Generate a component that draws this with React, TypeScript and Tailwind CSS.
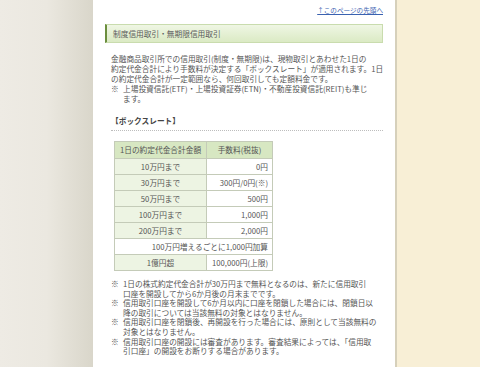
import React from "react";

const font = { fontFamily: '"Noto Sans CJK JP", "Noto Sans", sans-serif' };

function Line({ children, indent = false }: { children: React.ReactNode; indent?: boolean }) {
  return <div className={`whitespace-nowrap ${indent ? "pl-[12px]" : ""}`}>{children}</div>;
}

function Note({ lines }: { lines: string[] }) {
  return (
    <div>
      <div className="flex whitespace-nowrap">
        <span className="w-[12px] shrink-0">※</span>
        <span>{lines[0]}</span>
      </div>
      {lines.slice(1).map((l, i) => (
        <div key={i} className="pl-[12px] whitespace-nowrap">{l}</div>
      ))}
    </div>
  );
}

const rows: [string, string][] = [
  ["10万円まで", "0円"],
  ["30万円まで", "300円/0円(※)"],
  ["50万円まで", "500円"],
  ["100万円まで", "1,000円"],
  ["200万円まで", "2,000円"],
];

export default function App() {
  return (
    <div className="flex h-[367px] w-[480px] overflow-hidden text-[#555]" style={font}>
      <div className="w-[93px] shrink-0 bg-gradient-to-r from-[#eeebe4] via-[#ebe8e0] to-[#d9d6ca]" />
      <div className="w-[302px] shrink-0 bg-white px-[12px] text-[7.7px]">
        <div className="mt-[5px] flex h-[10px] items-center justify-end leading-[10px]">
          <span className="text-[6.6px] text-[#3a62b0] underline">↑このページの先頭へ</span>
        </div>
        <div className="mt-[9px] flex h-[19px] items-center border border-l-2 border-[#c9dcae] border-l-[#6b8e3e] bg-gradient-to-b from-[#eff6e4] to-[#dbeac4] pl-[6px] text-[#5a5a5a]">
          制度信用取引・無期限信用取引
        </div>
        <div className="mt-[11px] px-[6px] leading-[10px]">
          <Line>金融商品取引所での信用取引(制度・無期限)は、現物取引とあわせた1日の</Line>
          <Line>約定代金合計により手数料が決定する「ボックスレート」が適用されます。1日</Line>
          <Line>の約定代金合計が一定範囲なら、何回取引しても定額料金です。</Line>
          <div className="flex whitespace-nowrap">
            <span className="w-[12px] shrink-0">※</span>
            <span>上場投資信託(ETF)・上場投資証券(ETN)・不動産投資信託(REIT)も準じ</span>
          </div>
          <Line indent>ます。</Line>
          <div className="mt-[12px] font-bold leading-[10px] text-[#444]">【ボックスレート】</div>
          <div className="mt-[4px] mr-[-6px] border-b border-dotted border-[#bdbdbd]" />
          <table className="ml-[3px] mt-[10px] w-[158px] table-fixed border-collapse text-[#555]">
            <colgroup>
              <col className="w-[92px]" />
              <col className="w-[66px]" />
            </colgroup>
            <tbody>
              <tr className="h-[17px] bg-[#d7e7c2]">
                <td className="border border-[#c4cbb8] text-center">1日の約定代金合計金額</td>
                <td className="border border-[#c4cbb8] text-center">手数料(税抜)</td>
              </tr>
              {rows.map(([a, b]) => (
                <tr key={a} className="h-[16px]">
                  <td className="border border-[#c4cbb8] bg-[#edf4e3] text-center">{a}</td>
                  <td className="border border-[#c4cbb8] bg-white pr-[4px] text-right">{b}</td>
                </tr>
              ))}
              <tr className="h-[16px]">
                <td colSpan={2} className="border border-[#c4cbb8] bg-white pr-[4px] text-right">
                  100万円増えるごとに1,000円加算
                </td>
              </tr>
              <tr className="h-[16px]">
                <td className="border border-[#c4cbb8] bg-[#edf4e3] text-center">1億円超</td>
                <td className="border border-[#c4cbb8] bg-white pr-[4px] text-right">100,000円(上限)</td>
              </tr>
            </tbody>
          </table>
          <div className="mt-[8px] leading-[9.6px]">
            <Note lines={["1日の株式約定代金合計が30万円まで無料となるのは、新たに信用取引", "口座を開設してから6か月後の月末までです。"]} />
            <Note lines={["信用取引口座を開設して6か月以内に口座を閉鎖した場合には、閉鎖日以", "降の取引については当該無料の対象とはなりません。"]} />
            <Note lines={["信用取引口座を閉鎖後、再開設を行った場合には、原則として当該無料の", "対象とはなりません。"]} />
            <Note lines={["信用取引口座の開設には審査があります。審査結果によっては、「信用取", "引口座」の開設をお断りする場合があります。"]} />
          </div>
        </div>
      </div>
      <div className="w-[2px] shrink-0 bg-[#d6d0bb]" />
      <div className="flex-1 bg-[#f8efd6]" />
    </div>
  );
}
